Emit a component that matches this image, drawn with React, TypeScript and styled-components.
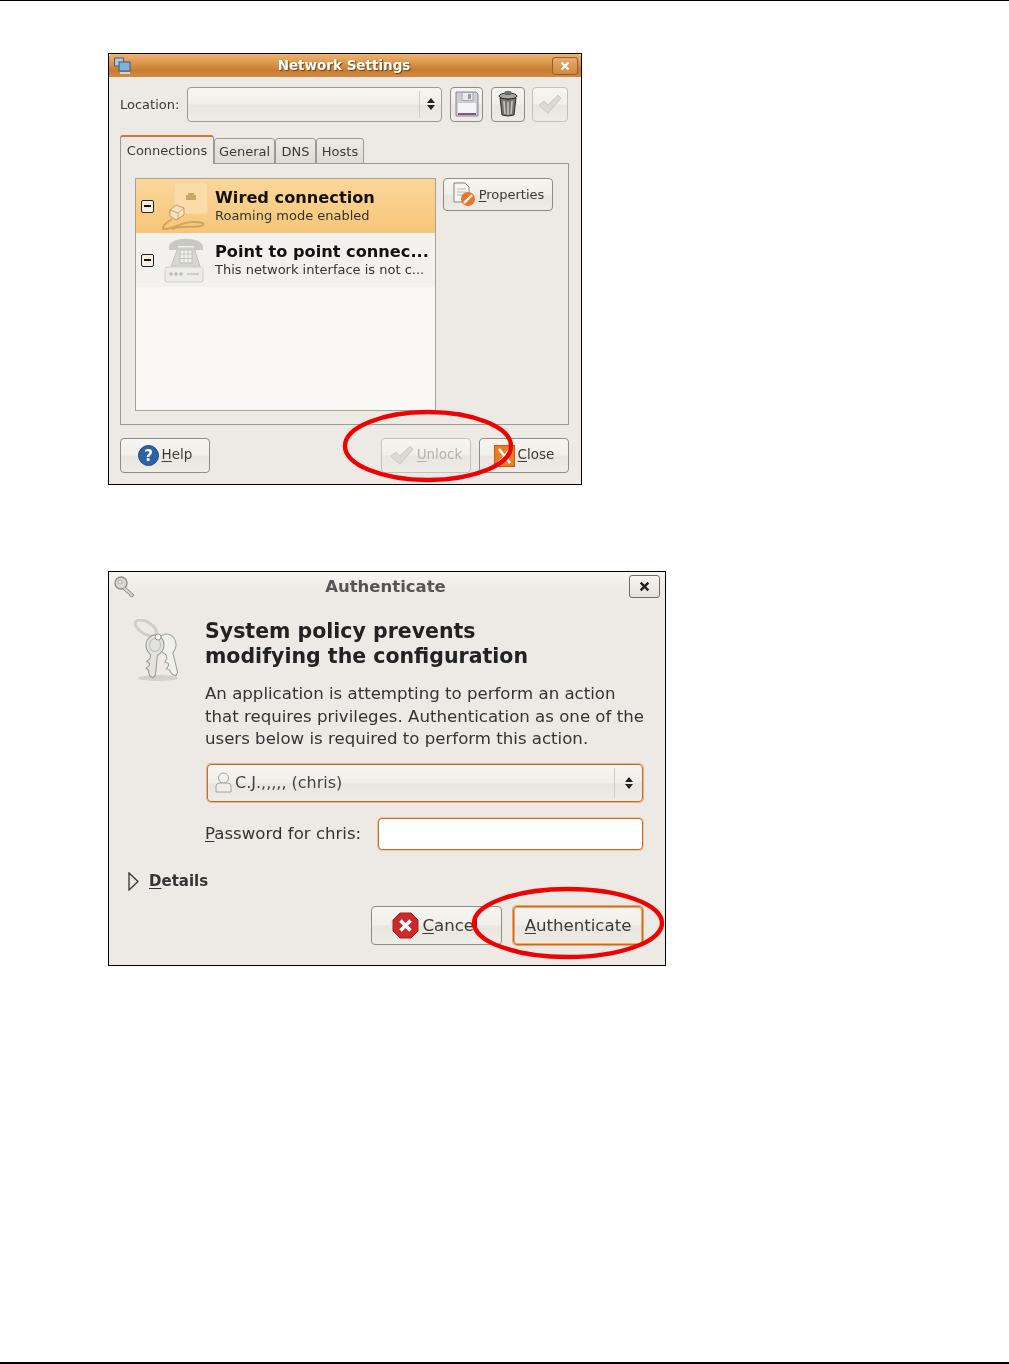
import React from 'react';
import styled, {createGlobalStyle} from 'styled-components';

const Global = createGlobalStyle`
  html, body {
    margin: 0;
    padding: 0;
    background: #fff;
    font-family: "DejaVu Sans", "Liberation Sans", sans-serif;
    color: #2e2e2a;
  }
  u { text-underline-offset: 2px; text-decoration-thickness: 1px; }
`;

const gloss = 'linear-gradient(#f6f5f1 0%, #f1efea 48%, #e9e6e0 52%, #eeece7 100%)';

const Page = styled.div`
  width: 1009px;
  height: 1364px;
  box-sizing: border-box;
  border-top: 1px solid #000;
  border-bottom: 2px solid #000;
  padding: 52px 0 0 108px;
  overflow: hidden;
`;

const Win = styled.div<{ $w: number, $h: number, $mt?: number }>`
  position: relative;
  box-sizing: border-box;
  width: ${p => p.$w}px;
  height: ${p => p.$h}px;
  margin-top: ${p => p.$mt || 0}px;
  background: #edeae5;
  border: 1px solid #000;
  filter: blur(0.4px);
`;

const OrangeTitle = styled.div`
  height: 23px;
  display: flex;
  align-items: center;
  padding: 0 3px 0 5px;
  background: linear-gradient(#eeb36f 0%, #dc9a52 35%, #c97c2e 70%, #d18a42 100%);
  border-radius: 3px 3px 0 0;
`;

const TitleText = styled.div`
  flex: 1;
  text-align: center;
  font-size: 13.5px;
  font-weight: bold;
  color: #fff;
  text-shadow: 1px 1px 1px #6b4311;
  padding: 0 0 2px 5px;
`;

const OrangeClose = styled.div`
  width: 26px;
  height: 18px;
  box-sizing: border-box;
  border: 1px solid #93602a;
  border-radius: 3px;
  background: linear-gradient(#e7ab69, #cf8a44);
  display: flex;
  align-items: center;
  justify-content: center;
`;

const NetBody = styled.div`
  padding: 9px 12px 0 11px;
`;

const LocationRow = styled.div`
  display: flex;
  align-items: center;
  height: 36px;
`;

const Label = styled.span`
  font-size: 13px;
  color: #3a3a36;
  width: 67px;
`;

const Combo = styled.div<{ $w: number, $h: number, $focus?: boolean, $mt?: number, $ml?: number }>`
  box-sizing: border-box;
  width: ${p => p.$w}px;
  height: ${p => p.$h}px;
  margin: ${p => p.$mt || 0}px 0 0 ${p => p.$ml || 0}px;
  display: flex;
  align-items: center;
  border: 1px solid ${p => p.$focus ? '#c8692a' : '#9d9a90'};
  box-shadow: ${p => p.$focus ? '0 0 0 1px #e8b48c' : 'none'};
  border-radius: 4px;
  background: ${gloss};
  font-size: 16px;
`;

const ComboValue = styled.div`
  flex: 1;
  display: flex;
  align-items: center;
  gap: 3px;
  padding-left: 7px;
  color: #444;
`;

const ComboSep = styled.div`
  width: 1px;
  align-self: stretch;
  margin: 3px 0;
  background: #cfccc4;
`;

const ComboArrows = styled.div<{ $w: number }>`
  width: ${p => p.$w}px;
  display: flex;
  justify-content: center;
`;

const IconBtn = styled.div<{ $w: number, $ml: number, $off?: boolean }>`
  box-sizing: border-box;
  width: ${p => p.$w}px;
  height: 35px;
  margin-left: ${p => p.$ml}px;
  display: flex;
  align-items: center;
  justify-content: center;
  border: 1px solid ${p => p.$off ? '#c4c1b8' : '#8f8c82'};
  border-radius: 4px;
  background: ${gloss};
`;

const Tabs = styled.div`
  display: flex;
  align-items: flex-end;
  height: 29px;
  margin-top: 13px;
  margin-bottom: -1px;
  position: relative;
`;

const Tab = styled.div<{ $w: number, $active?: boolean }>`
  box-sizing: border-box;
  width: ${p => p.$w}px;
  height: ${p => p.$active ? 29 : 26}px;
  padding-top: ${p => p.$active ? 1 : 0}px;
  text-align: center;
  font-size: 13px;
  line-height: 25px;
  color: #3a3a36;
  border: 1px solid #9d9a90;
  border-bottom: ${p => p.$active ? 'none' : '1px solid #9d9a90'};
  border-top: ${p => p.$active ? '2px solid #d9742a' : '1px solid #9d9a90'};
  border-radius: 3px 3px 0 0;
  background: ${p => p.$active ? '#edeae5' : 'linear-gradient(#eeebe6, #dedbd4)'};
  z-index: ${p => p.$active ? 1 : 0};
`;

const TabPanel = styled.div`
  box-sizing: border-box;
  width: 449px;
  height: 262px;
  border: 1px solid #9d9a90;
  padding: 14px 14px 0 14px;
  display: flex;
  gap: 7px;
`;

const ConnList = styled.div`
  box-sizing: border-box;
  width: 301px;
  height: 233px;
  border: 1px solid #a5a298;
  background: #f9f8f5;
`;

const ConnRow = styled.div<{ $selected?: boolean }>`
  height: 54px;
  display: flex;
  align-items: center;
  padding-left: 5px;
  background: ${p => p.$selected ? 'linear-gradient(#fbd79a, #f7c577)' : '#f3f1ed'};
`;

const Toggle = styled.div`
  box-sizing: border-box;
  width: 13px;
  height: 13px;
  margin-right: 5px;
  border: 1px solid #222;
  border-radius: 2px;
  background: #f7f0e0;
  display: flex;
  align-items: center;
  justify-content: center;
  &::before {
    content: '';
    width: 7px;
    height: 2px;
    background: #111;
  }
`;

const ConnIcon = styled.div`
  width: 50px;
  height: 50px;
  flex-shrink: 0;
`;

const ConnText = styled.div`
  padding-left: 6px;
  min-width: 0;
`;

const ConnName = styled.div`
  font-size: 16.2px;
  line-height: 20px;
  color: #111;
  font-weight: 600;
  white-space: nowrap;
`;

const ConnSub = styled.div`
  font-size: 13px;
  line-height: 16px;
  color: #333;
  white-space: nowrap;
`;

const Btn = styled.div<{ $w: number, $h: number, $off?: boolean, $default?: boolean, $fs?: number }>`
  box-sizing: border-box;
  width: ${p => p.$w}px;
  height: ${p => p.$h}px;
  display: flex;
  align-items: center;
  justify-content: center;
  gap: 3px;
  border: 1px solid ${p => p.$default ? '#c8692a' : p.$off ? '#c4c1b8' : '#8f8c82'};
  box-shadow: ${p => p.$default ? '0 0 0 1px #eaa56c, inset 0 0 0 1px #f0a868' : 'none'};
  border-radius: 4px;
  background: ${gloss};
  font-size: ${p => p.$fs || 13}px;
  color: ${p => p.$off ? '#b5b2aa' : '#3a3a36'};
  white-space: nowrap;
`;

const CancelBtn = styled(Btn)`
  padding-right: 2px;
`;

const RaisedLabel = styled.span`
  padding-bottom: 3px;
`;

const NetFooter = styled.div`
  display: flex;
  justify-content: space-between;
  margin-top: 13px;
`;

const FooterRight = styled.div`
  display: flex;
  gap: 8px;
`;

const Ring = styled.svg<{ $x: number, $y: number }>`
  position: absolute;
  left: ${p => p.$x}px;
  top: ${p => p.$y}px;
  overflow: visible;
  pointer-events: none;
`;

const AuthTitle = styled.div`
  height: 29px;
  display: flex;
  align-items: center;
  padding: 0 5px 0 4px;
  background: linear-gradient(#f7f6f3, #ecebe5 60%, #edeae5);
`;

const AuthTitleText = styled.div`
  flex: 1;
  text-align: center;
  font-size: 16.5px;
  font-weight: bold;
  color: #555;
  padding-left: 5px;
`;

const AuthClose = styled.div`
  width: 31px;
  height: 23px;
  box-sizing: border-box;
  border: 1px solid #6f6d66;
  border-radius: 3px;
  background: linear-gradient(#f7f6f3, #e5e2db);
  display: flex;
  align-items: center;
  justify-content: center;
`;

const AuthMain = styled.div`
  display: flex;
  padding: 18px 0 0 20px;
`;

const KeysBox = styled.div`
  width: 76px;
  flex-shrink: 0;
`;

const AuthCol = styled.div`
  width: 440px;
`;

const Heading = styled.div`
  font-size: 20.5px;
  font-weight: 600;
  line-height: 25px;
  color: #222;
  white-space: nowrap;
`;

const Para = styled.div`
  font-size: 16.6px;
  line-height: 22.5px;
  margin-top: 14px;
  color: #333;
  white-space: nowrap;
`;

const PasswordRow = styled.div`
  display: flex;
  align-items: center;
  justify-content: space-between;
  margin-top: 16px;
  font-size: 16.6px;
  color: #333;
  width: 438px;
`;

const PassInput = styled.div`
  box-sizing: border-box;
  width: 265px;
  height: 32px;
  background: #fff;
  border: 1px solid #c8692a;
  box-shadow: 0 0 0 1px #eec6a4;
  border-radius: 4px;
`;

const DetailsRow = styled.div`
  display: flex;
  align-items: center;
  gap: 10px;
  margin: 22px 0 0 19px;
  font-size: 15px;
  font-weight: bold;
  color: #333;
`;

const AuthFooter = styled.div`
  display: flex;
  gap: 11px;
  margin: 15px 0 0 262px;
`;

const Mn: React.FC<{ m: string, rest: string }> = ({m, rest}) => (
  <span><u>{m}</u>{rest}</span>
);

const Spinner = ({color = '#222'}: { color?: string }) => (
  <svg width="10" height="16" viewBox="0 0 10 16">
    <path d="M5 2 L9 7 H1 Z M1 9 H9 L5 14 Z" fill={color}/>
  </svg>
);

const CloseX = ({color, size}: { color: string, size: number }) => (
  <svg width={size} height={size} viewBox="0 0 10 10">
    <path d="M1.5 1.5 L8.5 8.5 M8.5 1.5 L1.5 8.5" stroke={color} strokeWidth="2.2"/>
  </svg>
);

const NetworkIcon = () => (
  <svg width="17" height="18" viewBox="0 0 17 18">
    <rect x="0.5" y="1" width="9" height="8" fill="#b6c6d6" stroke="#47617a"/>
    <rect x="5" y="5" width="11" height="9" fill="#7fb2dc" stroke="#3a5a78"/>
    <rect x="6" y="15" width="10" height="2" fill="#d7d3c6"/>
  </svg>
);

const Floppy = () => (
  <svg width="24" height="26" viewBox="0 0 24 26">
    <path d="M1 1 H21 L23 3 V25 H1 Z" fill="#cfcdd4" stroke="#8a888f"/>
    <rect x="7" y="1.5" width="11" height="8" fill="#e8e7ea" stroke="#a9a7ae"/>
    <rect x="13" y="3" width="3" height="5" fill="#9c9aa2"/>
    <rect x="3" y="12" width="18" height="12" fill="#f5f4f6"/>
    <rect x="3" y="22" width="18" height="2" fill="#87518f"/>
  </svg>
);

const Trash = () => (
  <svg width="22" height="26" viewBox="0 0 22 26">
    <ellipse cx="11" cy="5" rx="9" ry="3" fill="#a8a8a2" stroke="#333"/>
    <rect x="8" y="0.5" width="6" height="3" rx="1" fill="#777" stroke="#333" strokeWidth="0.6"/>
    <path d="M3 7 L5 24 Q11 26 17 24 L19 7 Q11 10 3 7 Z" fill="#77776f" stroke="#2c2c2a"/>
    <path d="M7 10 L8 23 M11 11 V24 M15 10 L14 23" stroke="#c4c4bc" strokeWidth="1.6"/>
  </svg>
);

const Check = ({size}: { size: number }) => (
  <svg width={size} height={size * 0.85} viewBox="0 0 24 20">
    <path d="M1 11 L6 7 L10 11 L20 1 L23 4 L10 19 Z" fill="#dcdad4" stroke="#c9c7c0"/>
  </svg>
);

const PropsIcon = () => (
  <svg width="24" height="25" viewBox="0 0 24 25">
    <path d="M2 1 H13 L17 5 V20 H2 Z" fill="#f5f5f2" stroke="#85857e"/>
    <path d="M5 7 H14 M5 10 H14 M5 13 H11" stroke="#b8b8b0"/>
    <circle cx="16" cy="17" r="7" fill="#e8762a"/>
    <path d="M12 21 L20 13" stroke="#fff" strokeWidth="2.4"/>
  </svg>
);

const WiredIcon = () => (
  <svg width="50" height="50" viewBox="0 0 50 50">
    <rect x="15" y="1" width="34" height="32" rx="3" fill="#fbdca8" stroke="#f6cf94"/>
    <path d="M27 19 V14 H29 V12 H35 V14 H37 V19 Z" fill="#cfa566"/>
    <path d="M11 29 L17 24 L25 27 L25 34 L17 39 L11 35 Z" fill="#f5e3c0" stroke="#c09a5c"/>
    <path d="M11 29 L19 32 L25 27 M19 32 V39" fill="none" stroke="#c09a5c" strokeWidth="0.8"/>
    <path d="M13 38 C6 42 0 49 7 48 C16 47 22 41 34 41 C44 41 47 43 42 45 C36 47 22 44 13 48"
          fill="none" stroke="#cfa566" strokeWidth="2"/>
  </svg>
);

const PhoneIcon = () => (
  <svg width="50" height="50" viewBox="0 0 50 50">
    <path d="M10 12 C10 1 44 1 44 12 L44 15 H35 V11 H19 V15 H10 Z" fill="#c9c9c4"/>
    <path d="M19 13 H35 L41 31 H12 Z" fill="#d8d8d3" stroke="#c2c2bc"/>
    <rect x="21" y="15" width="12" height="13" fill="#f1f1ee" stroke="#bcbcb6"/>
    <path d="M21 19 H33 M21 23.5 H33 M25 15 V28 M29 15 V28" stroke="#bcbcb6" strokeWidth="0.8"/>
    <rect x="6" y="32" width="38" height="15" rx="2" fill="#ecece8" stroke="#d0d0ca"/>
    <circle cx="12" cy="39" r="1.7" fill="#bcbcb6"/>
    <circle cx="17" cy="39" r="1.7" fill="#bcbcb6"/>
    <circle cx="22" cy="39" r="1.7" fill="#bcbcb6"/>
    <path d="M28 39 H40" stroke="#cfcfc8" strokeWidth="2"/>
  </svg>
);

const HelpIcon = () => (
  <svg width="21" height="21" viewBox="0 0 21 21">
    <circle cx="10.5" cy="10.5" r="10" fill="#2c62a8" stroke="#1c4680"/>
    <text x="10.5" y="16" textAnchor="middle" fontSize="15" fontWeight="bold" fill="#fff"
          fontFamily="DejaVu Sans">?</text>
  </svg>
);

const CloseDocIcon = () => (
  <svg width="21" height="22" viewBox="0 0 21 22">
    <rect x="0.5" y="0.5" width="20" height="21" fill="#ee7b22" stroke="#c65c14"/>
    <path d="M5 4 L16 18 M16 4 L5 18" stroke="#fff" strokeWidth="2.6"/>
  </svg>
);

const SmallKey = () => (
  <svg width="24" height="24" viewBox="0 0 24 24">
    <circle cx="8" cy="8" r="6" fill="#dcdad4" stroke="#8f8d87" strokeWidth="1.4"/>
    <circle cx="7" cy="7" r="2" fill="#fff" stroke="#8f8d87" strokeWidth="0.8"/>
    <path d="M12 12 L21 20 L19 22 L17 21 L16 19 L14 18 L10 14" fill="#d6d4ce" stroke="#8f8d87"/>
  </svg>
);

const keyPath = 'M-9 0 A9 10 0 1 1 9 0 C9 5 6 8 3.5 10 V30 L1 33 L-2 31 L-3.5 28 V26 L-6.5 24 L-3.5 21 V19 L-6.5 17 L-3.5 14 V10 C-6 8 -9 5 -9 0 Z';

const Keys = () => (
  <svg width="52" height="64" viewBox="0 0 52 64">
    <ellipse cx="29" cy="59" rx="20" ry="3" fill="#d4d1cb"/>
    <ellipse cx="17" cy="9" rx="12" ry="6" transform="rotate(32 17 9)" fill="none" stroke="#cfcec9" strokeWidth="3"/>
    <g transform="translate(38 25) rotate(-14)">
      <path d={keyPath} fill="#f0f0ec" stroke="#9c9c96"/>
    </g>
    <g transform="translate(26 26) rotate(6)">
      <path d={keyPath} fill="#e2e2de" stroke="#96968f"/>
      <ellipse cx="0" cy="0" rx="5.5" ry="6.5" fill="none" stroke="#bcbcb6"/>
    </g>
    <circle cx="29" cy="18" r="3" fill="#fafaf8" stroke="#9a9a94"/>
  </svg>
);

const UserIcon = () => (
  <svg width="17" height="21" viewBox="0 0 17 21">
    <circle cx="8.5" cy="6" r="5" fill="#f2f1ec" stroke="#a6a49c"/>
    <path d="M1 20 V14 Q1 11 5 11 H12 Q16 11 16 14 V20 Z" fill="#efeee8" stroke="#a6a49c"/>
  </svg>
);

const CancelIcon = () => (
  <svg width="27" height="27" viewBox="0 0 27 27">
    <path d="M8 1 H19 L26 8 V19 L19 26 H8 L1 19 V8 Z" fill="#cc2a2a" stroke="#a01e1e"/>
    <path d="M8.5 8.5 L18.5 18.5 M18.5 8.5 L8.5 18.5" stroke="#fff" strokeWidth="3.6"/>
  </svg>
);

const App: React.FC = () => {
  return (
    <Page>
      <Global/>
      <Win $w={474} $h={432}>
        <OrangeTitle>
          <NetworkIcon/>
          <TitleText>Network Settings</TitleText>
          <OrangeClose><CloseX color="#fff" size={10}/></OrangeClose>
        </OrangeTitle>
        <NetBody>
          <LocationRow>
            <Label>Location:</Label>
            <Combo $w={255} $h={35}>
              <ComboValue/>
              <ComboSep/>
              <ComboArrows $w={21}><Spinner/></ComboArrows>
            </Combo>
            <IconBtn $w={33} $ml={8}><Floppy/></IconBtn>
            <IconBtn $w={34} $ml={8}><Trash/></IconBtn>
            <IconBtn $w={36} $ml={7} $off><Check size={24}/></IconBtn>
          </LocationRow>
          <Tabs>
            <Tab $w={94} $active>Connections</Tab>
            <Tab $w={61}>General</Tab>
            <Tab $w={41}>DNS</Tab>
            <Tab $w={48}>Hosts</Tab>
          </Tabs>
          <TabPanel>
            <ConnList>
              <ConnRow $selected>
                <Toggle/>
                <ConnIcon><WiredIcon/></ConnIcon>
                <ConnText>
                  <ConnName>Wired connection</ConnName>
                  <ConnSub>Roaming mode enabled</ConnSub>
                </ConnText>
              </ConnRow>
              <ConnRow>
                <Toggle/>
                <ConnIcon><PhoneIcon/></ConnIcon>
                <ConnText>
                  <ConnName>Point to point connec...</ConnName>
                  <ConnSub>This network interface is not c...</ConnSub>
                </ConnText>
              </ConnRow>
            </ConnList>
            <Btn $w={110} $h={33}><PropsIcon/><Mn m="P" rest="roperties"/></Btn>
          </TabPanel>
          <NetFooter>
            <Btn $w={90} $h={35} $fs={13.5}><HelpIcon/><RaisedLabel><Mn m="H" rest="elp"/></RaisedLabel></Btn>
            <FooterRight>
              <Btn $w={90} $h={35} $off $fs={13.5}><Check size={24}/><RaisedLabel><Mn m="U" rest="nlock"/></RaisedLabel></Btn>
              <Btn $w={90} $h={35} $fs={13.5}><CloseDocIcon/><RaisedLabel><Mn m="C" rest="lose"/></RaisedLabel></Btn>
            </FooterRight>
          </NetFooter>
        </NetBody>
        <Ring $x={234} $y={356} width="170" height="72" viewBox="0 0 170 72">
          <ellipse cx="85" cy="36" rx="83" ry="34" fill="none" stroke="#f00000" strokeWidth="4.4"/>
        </Ring>
      </Win>

      <Win $w={558} $h={395} $mt={86}>
        <AuthTitle>
          <SmallKey/>
          <AuthTitleText>Authenticate</AuthTitleText>
          <AuthClose><CloseX color="#222" size={11}/></AuthClose>
        </AuthTitle>
        <AuthMain>
          <KeysBox><Keys/></KeysBox>
          <AuthCol>
            <Heading>System policy prevents<br/>modifying the configuration</Heading>
            <Para>
              An application is attempting to perform an action<br/>
              that requires privileges. Authentication as one of the<br/>
              users below is required to perform this action.
            </Para>
            <Combo $w={436} $h={38} $focus $mt={13} $ml={2}>
              <ComboValue><UserIcon/>C.J.,,,,, (chris)</ComboValue>
              <ComboSep/>
              <ComboArrows $w={27}><Spinner/></ComboArrows>
            </Combo>
            <PasswordRow>
              <Mn m="P" rest="assword for chris:"/>
              <PassInput/>
            </PasswordRow>
          </AuthCol>
        </AuthMain>
        <DetailsRow>
          <svg width="11" height="19" viewBox="0 0 11 19">
            <path d="M1 1 L10 9.5 L1 18 Z" fill="none" stroke="#333" strokeWidth="1.3"/>
          </svg>
          <Mn m="D" rest="etails"/>
        </DetailsRow>
        <AuthFooter>
          <CancelBtn $w={131} $h={39} $fs={16.6}><CancelIcon/><Mn m="C" rest="ancel"/></CancelBtn>
          <Btn $w={130} $h={39} $fs={16.6} $default><Mn m="A" rest="uthenticate"/></Btn>
        </AuthFooter>
        <Ring $x={363} $y={315} width="192" height="72" viewBox="0 0 192 72">
          <ellipse cx="96" cy="36" rx="94" ry="34" fill="none" stroke="#f00000" strokeWidth="4.4"/>
        </Ring>
      </Win>
    </Page>
  );
};

export default App;
